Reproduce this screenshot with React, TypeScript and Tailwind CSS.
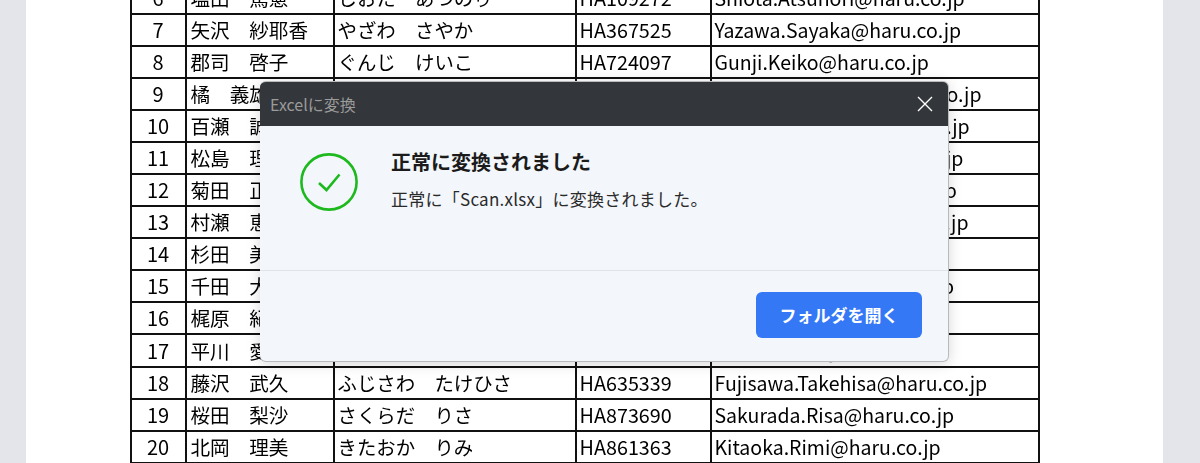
import React from "react";

const rows: [string, string, string, string, string][] = [
  ["6", "塩田　篤憲", "しおた　あつのり", "HA109272", "Shiota.Atsunori@haru.co.jp"],
  ["7", "矢沢　紗耶香", "やざわ　さやか", "HA367525", "Yazawa.Sayaka@haru.co.jp"],
  ["8", "郡司　啓子", "ぐんじ　けいこ", "HA724097", "Gunji.Keiko@haru.co.jp"],
  ["9", "橘　義雄", "たちばな　よしお", "HA512086", "Tachibana.Yoshio@haru.co.jp"],
  ["10", "百瀬　誠", "ももせ　みこと", "HA340917", "Momose.Mikoto@haru.co.jp"],
  ["11", "松島　理", "まつしま　りい", "HA228461", "Matsushima.Rii@haru.co.jp"],
  ["12", "菊田　正", "きくた　ただし", "HA905132", "Kikuta.Tadashi@haru.co.jp"],
  ["13", "村瀬　恵", "むらせ　めぐみ", "HA671340", "Murase.Megumi@haru.co.jp"],
  ["14", "杉田　美咲", "すぎた　みさき", "HA418256", "Sugita.Misaki@haru.co"],
  ["15", "千田　大輔", "せんだ　たいすけ", "HA783019", "Senda.Taisuke@haru.co.jp"],
  ["16", "梶原　紀子", "かじわら　のりこ", "HA296574", "Kaji.Noriko@haru.co"],
  ["17", "平川　愛", "ひらかわ　あい", "HA150823", "Hirakawa.Ai@haru.co"],
  ["18", "藤沢　武久", "ふじさわ　たけひさ", "HA635339", "Fujisawa.Takehisa@haru.co.jp"],
  ["19", "桜田　梨沙", "さくらだ　りさ", "HA873690", "Sakurada.Risa@haru.co.jp"],
  ["20", "北岡　理美", "きたおか　りみ", "HA861363", "Kitaoka.Rimi@haru.co.jp"],
];

export default function App() {
  return (
    <div
      className="relative flex h-[463px] w-[1200px] justify-center overflow-hidden bg-[#e4e5ea] text-black"
      style={{ fontFamily: '"Noto Sans CJK JP", "Noto Sans", sans-serif' }}
    >
      <div className="h-full w-[1137px] -translate-x-[6px] overflow-hidden bg-white pl-[104px]">
        <table className="-mt-[19px] w-[908px] table-fixed border-collapse blur-[0.4px]">
          <colgroup>
            <col className="w-[55px]" />
            <col className="w-[148px]" />
            <col className="w-[242px]" />
            <col className="w-[135px]" />
            <col className="w-[328px]" />
          </colgroup>
          <tbody>
            {rows.map((r) => (
              <tr key={r[0]} className={r[0] === "17" ? "h-[33px]" : "h-[32px]"}>
                <td className="border-2 border-[#111] p-0 text-center text-[20px] leading-none">{r[0]}</td>
                <td className="border-2 border-[#111] whitespace-nowrap py-0 pl-[4px] pr-0 text-[19.6px] leading-none">{r[1]}</td>
                <td className="border-2 border-[#111] whitespace-nowrap py-0 pl-[3px] pr-0 text-[19.4px] leading-none">{r[2]}</td>
                <td className="border-2 border-[#111] whitespace-nowrap py-0 pl-[3px] pr-0 text-[19.8px] leading-none">{r[3]}</td>
                <td className="border-2 border-[#111] whitespace-nowrap py-0 pl-[3px] pr-0 text-[19.5px] leading-none">{r[4]}</td>
              </tr>
            ))}
          </tbody>
        </table>
      </div>

      <div className="absolute left-[260px] top-[81px] flex h-[281px] w-[689px] flex-col overflow-hidden rounded-[6px] border-t border-r border-b border-[#b9babc] bg-[#f3f6fa] shadow-[0_2px_14px_rgba(0,0,0,0.16)]">
        <div className="flex h-[44px] shrink-0 items-center justify-between bg-[#33363a] pl-[10px] pr-[14px]">
          <span className="text-[16px] text-[#9b9b9b]">Excelに変換</span>
          <svg width="18" height="18" viewBox="0 0 18 18" fill="none" stroke="#fff" strokeWidth="1.4">
            <path d="M2 2 L16 16 M16 2 L2 16" />
          </svg>
        </div>
        <div className="flex h-[145px] shrink-0 border-b border-[#e1e3e9] pl-[40px] pt-[27px]">
          <svg width="58" height="58" viewBox="0 0 58 58" fill="none" stroke="#1eb91e" className="shrink-0">
            <circle cx="29" cy="29" r="27.6" strokeWidth="2.6" />
            <path d="M19 30 L26.5 37 L39.5 21.5" strokeWidth="2.6" />
          </svg>
          <div className="ml-[33px] -mt-[3px]">
            <div className="text-[20px] font-bold leading-[24px] text-[#1b1b1b]">正常に変換されました</div>
            <div className="mt-[13px] text-[17px] leading-[24px] tracking-[0.25px] text-[#2a2a2a]">正常に「Scan.xlsx」に変換されました。</div>
          </div>
        </div>
        <div className="flex flex-1 justify-end pr-[26px] pt-[21px]">
          <button className="h-[46px] w-[166px] rounded-[6px] bg-[#3478f6] text-[17px] font-bold text-white">
            フォルダを開く
          </button>
        </div>
      </div>
    </div>
  );
}
